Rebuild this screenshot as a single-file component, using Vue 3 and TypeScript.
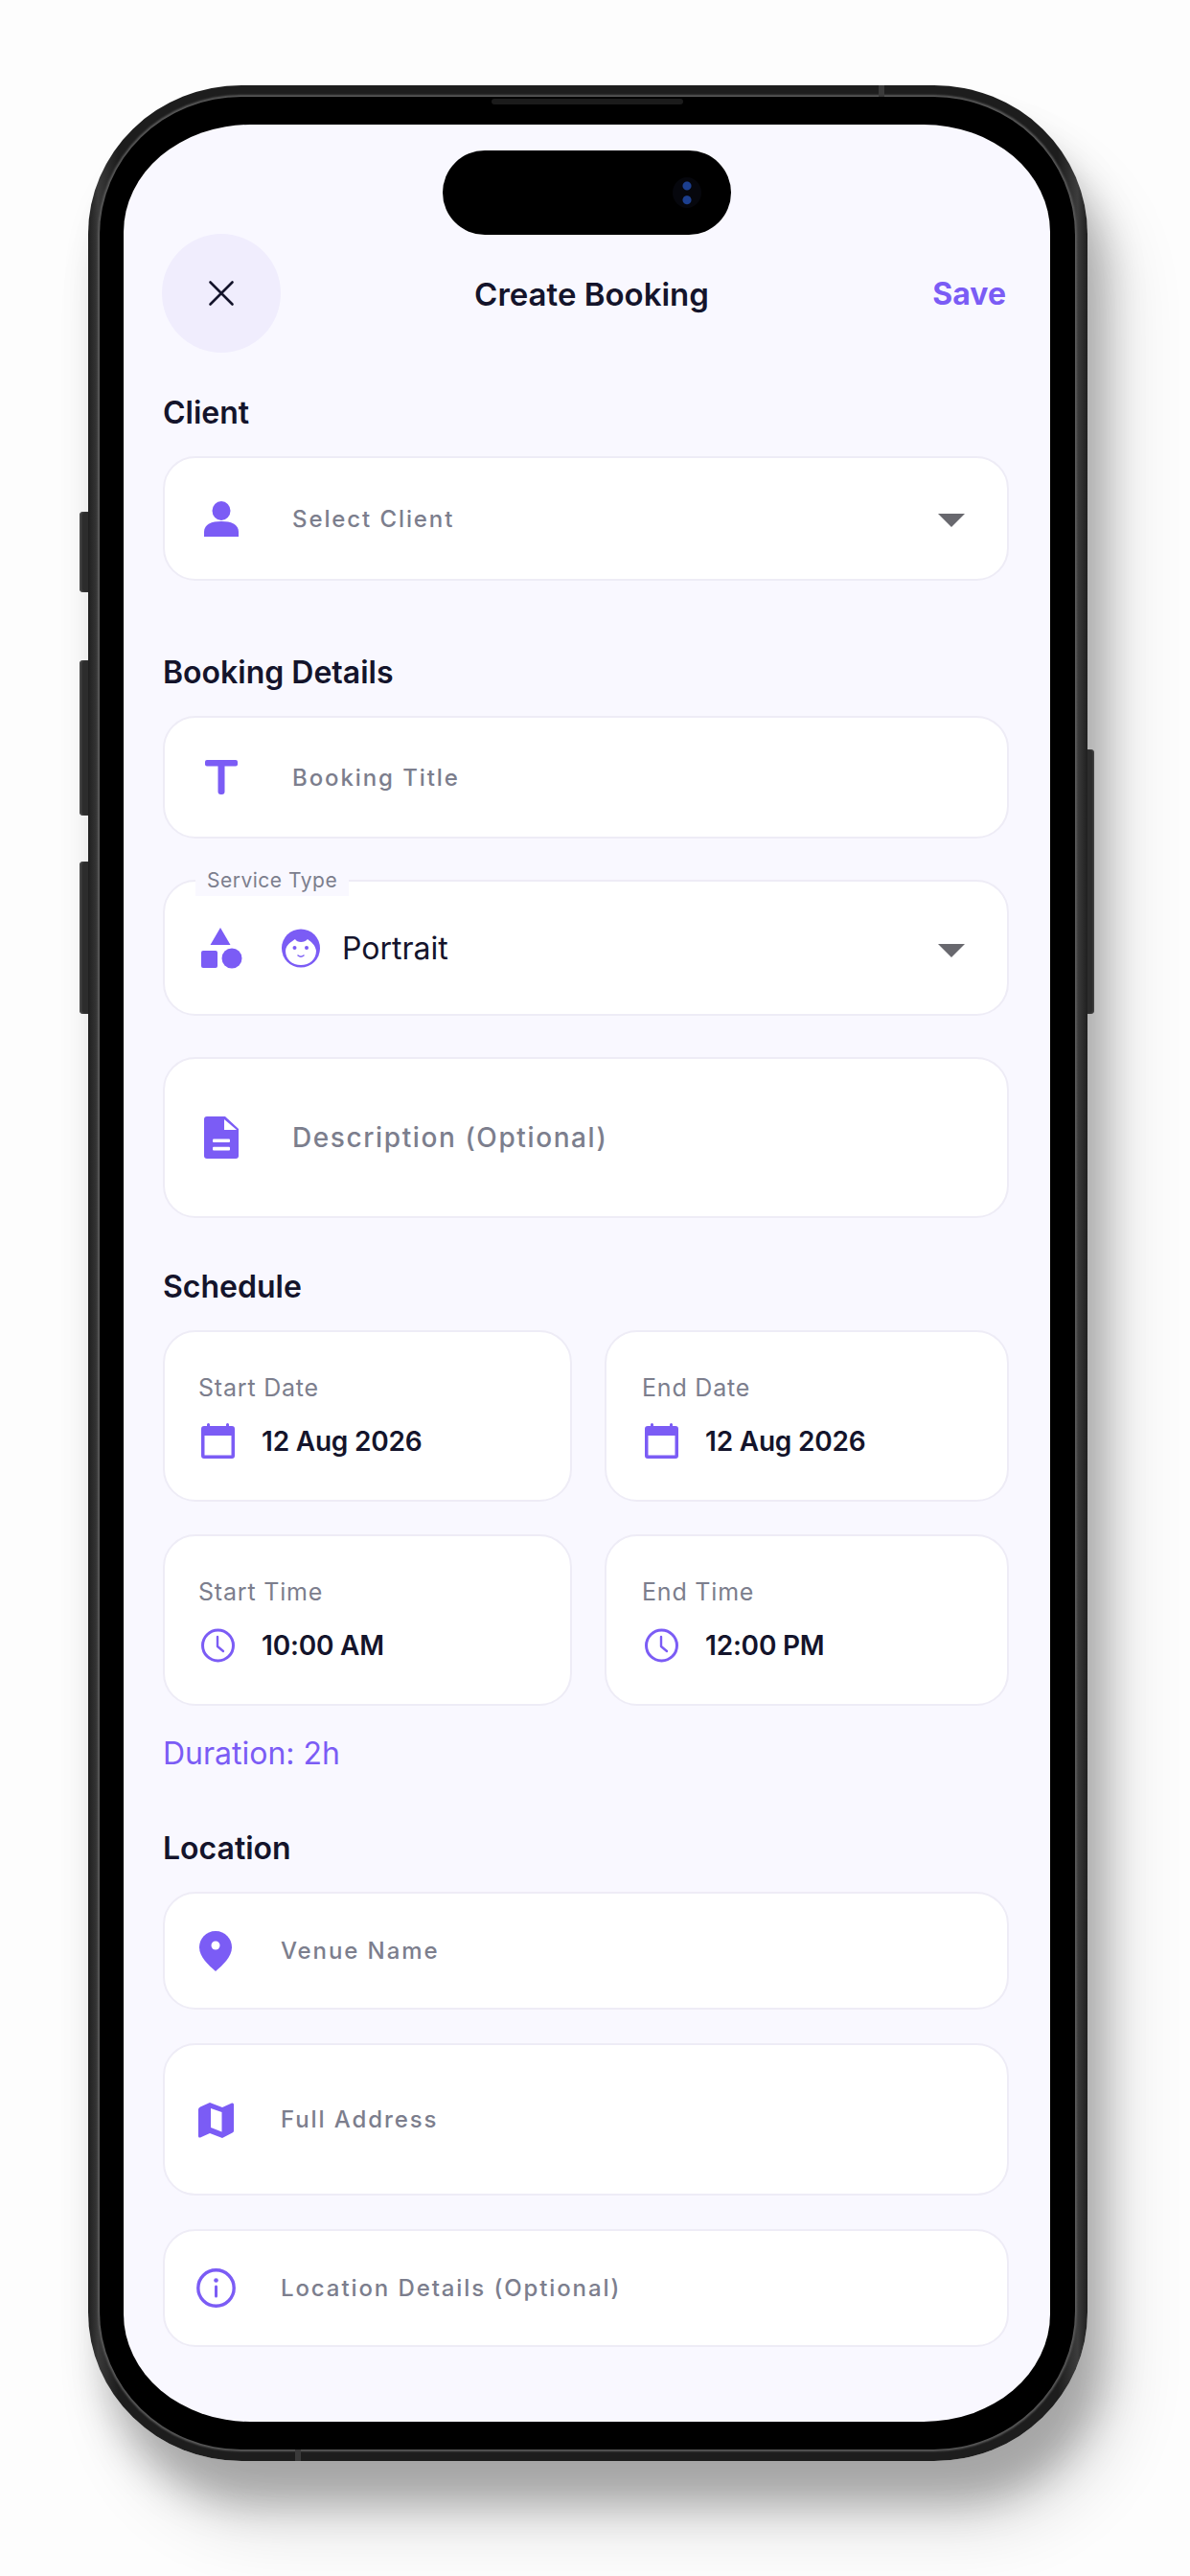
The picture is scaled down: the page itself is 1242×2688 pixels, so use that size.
<template>
  <div class="page">
    <div class="phone">
      <span class="btn btn--mute"></span>
      <span class="btn btn--up"></span>
      <span class="btn btn--down"></span>
      <span class="btn btn--power"></span>
      <span class="speaker"></span>
      <span class="seam seam--top"></span>
      <span class="seam seam--bottom"></span>

      <div class="bezel">
        <main class="screen">
          <div class="island"><span class="camera"></span></div>

          <header class="head">
            <button type="button" class="close" aria-label="Close">
              <svg width="28" height="28" viewBox="0 0 28 28" fill="none" stroke="#14142b" stroke-width="2.6" stroke-linecap="round">
                <path d="M2.5 2.5l23 23M25.5 2.5l-23 23" />
              </svg>
            </button>
            <h1 class="head__title">Create Booking</h1>
            <span class="head__save">Save</span>
          </header>

          <h2 class="heading heading--first">Client</h2>
          <div class="field field--client">
            <span class="slot">
              <svg width="36" height="37" viewBox="0 0 36 37" fill="#7b5cf5">
                <ellipse cx="18" cy="10" rx="9.5" ry="10" />
                <path d="M0 37v-5c0-8 8-11 18-11s18 3 18 11v5z" />
              </svg>
            </span>
            <span class="placeholder">Select Client</span>
            <span class="caret"></span>
          </div>

          <h2 class="heading">Booking Details</h2>
          <div class="field field--title">
            <span class="slot">
              <svg width="34" height="36" viewBox="0 0 34 36" fill="#7b5cf5">
                <rect width="34" height="6.5" rx="2" />
                <rect x="13.5" width="7" height="36" rx="3" />
              </svg>
            </span>
            <span class="placeholder">Booking Title</span>
          </div>

          <div class="field field--service">
            <span class="field__legend">Service Type</span>
            <span class="slot">
              <svg width="44" height="44" viewBox="0 0 44 44" fill="#7b5cf5">
                <path d="M21 1l10.5 18h-21z" />
                <rect x="1" y="25" width="17" height="18" rx="2" />
                <circle cx="33" cy="33" r="10.5" />
              </svg>
            </span>
            <svg class="face" width="40" height="41" viewBox="0 0 40 41">
              <circle cx="20" cy="20.5" r="20" fill="#7b5cf5" />
              <path d="M4 23c1-7 6-9 10-12 2 4 10 4 13 0 4 3 8 6 9 12 0 9-7 15-16 15S4 32 4 23z" fill="#fff" />
              <circle cx="13.5" cy="20" r="2" fill="#7b5cf5" />
              <circle cx="26" cy="20" r="2" fill="#7b5cf5" />
              <path d="M17 28q3 2.5 6 0" fill="none" stroke="#7b5cf5" stroke-width="1.5" stroke-linecap="round" />
            </svg>
            <span class="field__value">Portrait</span>
            <span class="caret"></span>
          </div>

          <div class="field field--desc">
            <span class="slot">
              <svg width="36" height="44" viewBox="0 0 36 44">
                <path d="M3 0h19l14 13v28a3 3 0 0 1-3 3H3a3 3 0 0 1-3-3V3a3 3 0 0 1 3-3z" fill="#7b5cf5" />
                <path d="M21 3l13 11H21z" fill="#fff" />
                <rect x="9" y="23.5" width="18" height="3.6" rx="1" fill="#fff" />
                <rect x="9" y="31.8" width="18" height="3.6" rx="1" fill="#fff" />
              </svg>
            </span>
            <span class="placeholder placeholder--large">Description (Optional)</span>
          </div>

          <h2 class="heading heading--schedule">Schedule</h2>
          <div class="grid">
            <div v-for="item in schedule" :key="item.label" class="tile">
              <span class="tile__label">{{ item.label }}</span>
              <div class="tile__row">
                <svg v-if="item.kind === 'date'" width="35" height="37" viewBox="0 0 35 37">
                  <path fill-rule="evenodd" d="M6 3V1.500a1.500 1.500 0 0 1 3 0V3h17V1.500a1.500 1.500 0 0 1 3 0V3h3a3 3 0 0 1 3 3v28a3 3 0 0 1-3 3H3a3 3 0 0 1-3-3V6a3 3 0 0 1 3-3zM3.500 13v20.500h28V13z" fill="#7b5cf5" />
                </svg>
                <svg v-else width="35" height="36" viewBox="0 0 35 36" fill="none" stroke="#7b5cf5">
                  <circle cx="17.500" cy="18" r="16" stroke-width="3" />
                  <path d="M17 9v10l6 5" stroke-width="2.400" stroke-linecap="round" stroke-linejoin="round" />
                </svg>
                <span class="tile__value">{{ item.value }}</span>
              </div>
            </div>
          </div>
          <p class="duration">Duration: 2h</p>

          <h2 class="heading heading--location">Location</h2>
          <div class="field field--place">
            <span class="slot slot--narrow">
              <svg width="34" height="42" viewBox="0 0 34 42">
                <path d="M17 0C7 0 0 8 0 17c0 10 10 19 17 25 7-6 17-15 17-25C34 8 27 0 17 0z" fill="#7b5cf5" />
                <circle cx="17" cy="15" r="4.500" fill="#fff" />
              </svg>
            </span>
            <span class="placeholder">Venue Name</span>
          </div>
          <div class="field field--place field--address">
            <span class="slot slot--narrow">
              <svg width="37" height="38" viewBox="0 0 37 38">
                <path fill-rule="evenodd" d="M2 5.500l10-4.500 13 5 10-4.500q2-.500 2 1.500v27.500q0 1.500-1.500 2L25 38l-13-5-10 4.500Q0 38 0 36V8q0-1.500 2-2.500zM13 7v20l11.500 4.500V11z" fill="#7b5cf5" />
              </svg>
            </span>
            <span class="placeholder">Full Address</span>
          </div>
          <div class="field field--place">
            <span class="slot slot--narrow">
              <svg width="41" height="41" viewBox="0 0 41 41">
                <circle cx="20.500" cy="20.500" r="18.700" fill="none" stroke="#7b5cf5" stroke-width="3.400" />
                <circle cx="20.500" cy="12.500" r="2.300" fill="#7b5cf5" />
                <rect x="19" y="17.500" width="3" height="13" rx="1.500" fill="#7b5cf5" />
              </svg>
            </span>
            <span class="placeholder">Location Details (Optional)</span>
          </div>
        </main>
      </div>
    </div>
  </div>
</template>

<script setup lang="ts">
interface ScheduleItem {
  label: string
  value: string
  kind: 'date' | 'time'
}

const schedule: ScheduleItem[] = [
  { label: 'Start Date', value: '12 Aug 2026', kind: 'date' },
  { label: 'End Date', value: '12 Aug 2026', kind: 'date' },
  { label: 'Start Time', value: '10:00 AM', kind: 'time' },
  { label: 'End Time', value: '12:00 PM', kind: 'time' },
]
</script>

<style>
html,
body {
  margin: 0;
  background: #fdfdfd;
}
</style>

<style scoped>
.page {
  --accent: #7b5cf5;
  --ink: #14142b;
  --muted: #7c7e8d;
  --rule: #eeecf6;

  box-sizing: border-box;
  width: 1242px;
  height: 2688px;
  padding: 89px 107px 0 92px;
  font-family: Inter, 'Noto Sans', sans-serif;
  color: var(--ink);
}

.phone {
  position: relative;
  box-sizing: border-box;
  width: 1043px;
  height: 2479px;
  padding: 12px 13px 12px 12px;
  border-radius: 160px / 155px;
  background: linear-gradient(90deg, #1f1f1f, #3a3a3a 1%, #1d1d1d 3%, #1d1d1d 97%, #3c3c3c 99%, #1f1f1f);
  box-shadow:
    18px 44px 40px rgba(0, 0, 0, 0.26),
    34px 70px 70px rgba(0, 0, 0, 0.12);
}

.btn {
  position: absolute;
  width: 9px;
  background: #2c2c2c;
  box-shadow: inset 2px 0 2px #4a4a4a;
}

.btn--mute,
.btn--up,
.btn--down {
  left: -9px;
  border-radius: 4px 0 0 4px;
}

.btn--mute {
  top: 445px;
  height: 84px;
}

.btn--up {
  top: 600px;
  height: 162px;
}

.btn--down {
  top: 810px;
  height: 159px;
}

.btn--power {
  top: 693px;
  right: -7px;
  width: 7px;
  height: 276px;
  border-radius: 0 4px 4px 0;
  box-shadow: inset -1px 0 2px #4a4a4a;
}

.speaker {
  position: absolute;
  top: 14px;
  left: 421px;
  width: 200px;
  height: 6px;
  border-radius: 3px;
  background: #1b1b1b;
  z-index: 2;
}

.seam {
  position: absolute;
  width: 6px;
  height: 12px;
  background: #3a3a3a;
}

.seam--top {
  top: 0;
  left: 825px;
}

.seam--bottom {
  bottom: 0;
  left: 216px;
}

.bezel {
  box-sizing: border-box;
  height: 100%;
  padding: 29px 26px 29px 25px;
  border-radius: 148px / 144px;
  background: #000;
  box-shadow: 0 0 2px 2px #5a5a5a;
}

.screen {
  position: relative;
  box-sizing: border-box;
  height: 100%;
  padding: 114px 43px 0 41px;
  overflow: hidden;
  border-radius: 132px / 112px;
  background: #f9f8ff;
}

.island {
  position: absolute;
  top: 27px;
  left: 333px;
  width: 301px;
  height: 88px;
  border-radius: 44px;
  background: #000;
}

.camera {
  position: absolute;
  top: 28px;
  right: 31px;
  width: 30px;
  height: 32px;
  border-radius: 50%;
  background:
    radial-gradient(circle at 50% 28%, #1c3f8f 0 4px, transparent 5px),
    radial-gradient(circle at 50% 74%, #1c3f8f 0 4px, transparent 5px),
    #06070d;
}

.head {
  display: grid;
  grid-template-columns: 1fr auto 1fr;
  align-items: center;
  height: 124px;
  margin-left: -1px;
}

.close {
  display: flex;
  align-items: center;
  justify-content: center;
  width: 124px;
  height: 124px;
  padding: 0;
  border: 0;
  border-radius: 50%;
  background: #f0edfd;
}

.head__title {
  margin: 2px 0 0;
  padding-left: 13px;
  font-size: 33px;
  font-weight: 600;
  line-height: 40px;
}

.head__save {
  justify-self: end;
  margin: 1px 3px 0 0;
  font-size: 32px;
  font-weight: 700;
  color: var(--accent);
}

.heading {
  margin: 76px 0 25px;
  font-size: 32px;
  font-weight: 600;
  line-height: 40px;
}

.heading--first {
  margin-top: 43px;
}

.heading--schedule {
  margin-top: 52px;
}

.heading--location {
  margin-top: 59px;
}

.field {
  position: relative;
  display: flex;
  align-items: center;
  box-sizing: border-box;
  padding: 0 44px 0 23px;
  border: 2px solid var(--rule);
  border-radius: 34px;
  background: #fff;
}

.field--client {
  height: 130px;
}

.field--title {
  height: 128px;
}

.field--service {
  height: 142px;
  margin-top: 43px;
}

.field--desc {
  height: 168px;
  margin-top: 43px;
}

.field--place {
  height: 123px;
}

.field--address {
  height: 159px;
  margin: 35px 0;
}

.field__legend {
  position: absolute;
  top: -17px;
  left: 32px;
  padding: 0 12px;
  background: #f9f8ff;
  font-size: 21px;
  line-height: 32px;
  letter-spacing: 0.5px;
  color: var(--muted);
}

.field__value {
  font-size: 32px;
}

.slot {
  display: flex;
  flex: 0 0 72px;
  justify-content: center;
  margin-right: 38px;
}

.slot--narrow {
  flex-basis: 60px;
}

.field--service .slot {
  margin-right: 27px;
}

.face {
  margin-right: 23px;
}

.placeholder {
  font-size: 24px;
  font-weight: 500;
  letter-spacing: 1.9px;
  color: var(--muted);
}

.placeholder--large {
  font-size: 28px;
  letter-spacing: 1.6px;
}

.caret {
  width: 0;
  height: 0;
  margin: 3px 0 0 auto;
  border-top: 14px solid #68686e;
  border-right: 14px solid transparent;
  border-left: 14px solid transparent;
}

.field--service .caret {
  margin-top: 6px;
}

.grid {
  display: grid;
  grid-template-columns: 427px 422px;
  grid-auto-rows: 179px;
  gap: 34px;
}

.tile {
  display: flex;
  flex-direction: column;
  justify-content: center;
  gap: 20px;
  box-sizing: border-box;
  padding-left: 35px;
  border: 2px solid var(--rule);
  border-radius: 34px;
  background: #fff;
}

.tile:nth-child(even) {
  padding-left: 37px;
}

.tile__label {
  font-size: 25px;
  line-height: 32px;
  letter-spacing: 0.8px;
  color: var(--muted);
}

.tile__row {
  display: flex;
  align-items: center;
  gap: 28px;
  height: 40px;
  padding-left: 3px;
}

.tile__value {
  font-size: 28px;
  font-weight: 600;
  letter-spacing: -0.2px;
}

.duration {
  margin: 30px 0 0;
  font-size: 32px;
  line-height: 40px;
  color: var(--accent);
}
</style>
